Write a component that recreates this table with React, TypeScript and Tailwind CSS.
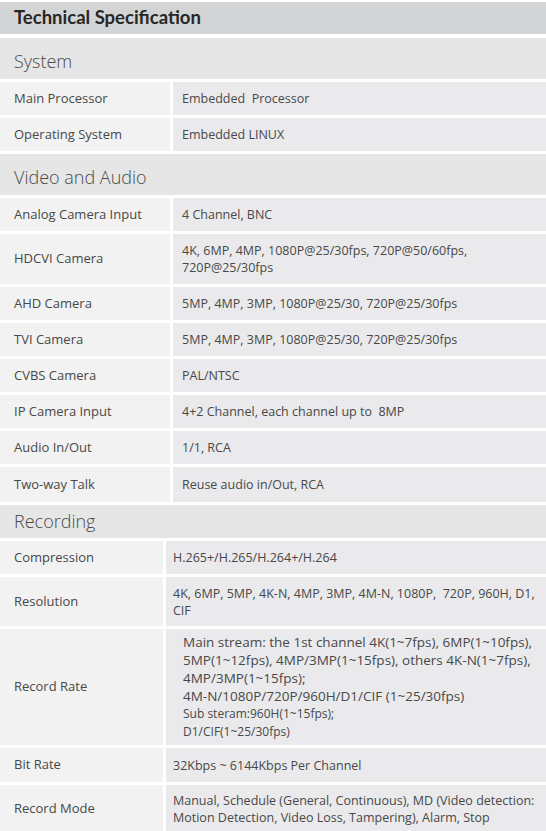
import React from "react";

type Row = { label: string; value: React.ReactNode; h: string };
type Section = { title: string; h: string; labelW: string; valuePad: string; rows: Row[] };

const sections: Section[] = [
  {
    title: "System",
    h: "h-[41px] pt-[5px]",
    labelW: "w-[170px]",
    valuePad: "pl-[9px]",
    rows: [
      { label: "Main Processor", value: "Embedded  Processor", h: "h-[33px]" },
      { label: "Operating System", value: "Embedded LINUX", h: "h-[33px]" },
    ],
  },
  {
    title: "Video and Audio",
    h: "h-[41px] pt-[5px]",
    labelW: "w-[170px]",
    valuePad: "pl-[9px]",
    rows: [
      { label: "Analog Camera Input", value: "4 Channel, BNC", h: "h-[33px]" },
      {
        label: "HDCVI Camera",
        value: "4K, 6MP, 4MP, 1080P@25/30fps, 720P@50/60fps,\n720P@25/30fps",
        h: "h-[50px]",
      },
      { label: "AHD Camera", value: "5MP, 4MP, 3MP, 1080P@25/30, 720P@25/30fps", h: "h-[33px]" },
      { label: "TVI Camera", value: "5MP, 4MP, 3MP, 1080P@25/30, 720P@25/30fps", h: "h-[33px]" },
      { label: "CVBS Camera", value: "PAL/NTSC", h: "h-[33px]" },
      { label: "IP Camera Input", value: "4+2 Channel, each channel up to  8MP", h: "h-[33px]" },
      { label: "Audio In/Out", value: "1/1, RCA", h: "h-[33px]" },
      { label: "Two-way Talk", value: "Reuse audio in/Out, RCA", h: "h-[35px]" },
    ],
  },
  {
    title: "Recording",
    h: "h-[33px]",
    labelW: "w-[163px]",
    valuePad: "pl-[7px]",
    rows: [
      { label: "Compression", value: "H.265+/H.265/H.264+/H.264", h: "h-[33px]" },
      {
        label: "Resolution",
        value: "4K, 6MP, 5MP, 4K-N, 4MP, 3MP, 4M-N, 1080P,  720P, 960H, D1,\nCIF",
        h: "h-[49px]",
      },
      {
        label: "Record Rate",
        value: (
          <div className="leading-[18px] pl-[17px] text-[13.5px]">
            <div>Main stream: the 1st channel 4K(1~7fps), 6MP(1~10fps),</div>
            <div>5MP(1~12fps), 4MP/3MP(1~15fps), others 4K-N(1~7fps),</div>
            <div>4MP/3MP(1~15fps);</div>
            <div>4M-N/1080P/720P/960H/D1/CIF (1~25/30fps)</div>
            <div className="text-[12px]">Sub steram:960H(1~15fps);</div>
            <div className="text-[12px]">D1/CIF(1~25/30fps)</div>
          </div>
        ),
        h: "h-[116px]",
      },
      { label: "Bit Rate", value: "32Kbps ~ 6144Kbps Per Channel", h: "h-[34px]" },
      {
        label: "Record Mode",
        value:
          "Manual, Schedule (General, Continuous), MD (Video detection:\nMotion Detection, Video Loss, Tampering), Alarm, Stop",
        h: "h-[48px]",
      },
    ],
  },
];

export default function App() {
  return (
    <div className="w-[546px] bg-white pt-[2px] text-[#484848] font-['Open_Sans',sans-serif]">
      <div className="h-[32px] bg-[#d3d4d6] flex items-center pl-[14px] mb-[4px]">
        <h1 className="font-['Lato',sans-serif] font-bold text-[18.5px] text-[#262626]">Technical Specification</h1>
      </div>
      <div className="flex flex-col gap-[3px]">
        {sections.map((s) => (
          <React.Fragment key={s.title}>
            <div className={`${s.h} bg-[#e6e6e6] flex items-center pl-[14px]`}>
              <h2 className="text-[18px] font-light text-[#4a4a4a]">{s.title}</h2>
            </div>
            {s.rows.map((r) => (
              <div key={r.label} className={`${r.h} flex gap-[3px]`}>
                <div className={`${s.labelW} shrink-0 bg-[#f2f2f2] flex items-center pl-[14px] text-[13px]`}>
                  {r.label}
                </div>
                <div
                  className={`flex-1 bg-[#eaeaec] flex items-center ${
                    typeof r.value === "string" ? s.valuePad : ""
                  } text-[12.5px] leading-[17px] whitespace-pre-wrap`}
                >
                  {r.value}
                </div>
              </div>
            ))}
          </React.Fragment>
        ))}
      </div>
    </div>
  );
}
